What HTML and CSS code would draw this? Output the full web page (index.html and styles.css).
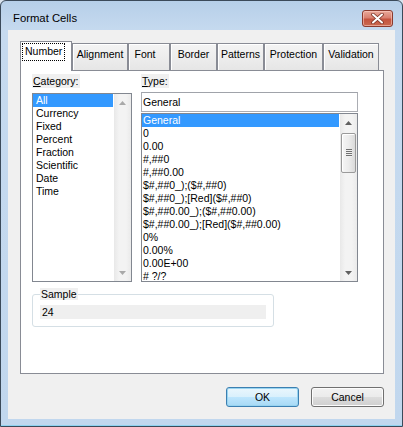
FILE: index.html
```html
<!DOCTYPE html>
<html lang="en">
<head>
<meta charset="utf-8">
<title>Format Cells</title>
<link rel="stylesheet" href="styles.css">
</head>
<body>
<div class="window">
  <div class="titlebar">
    <span class="title">Format Cells</span>
    <button class="close" aria-label="Close">
      <svg width="13" height="11" viewBox="0 0 13 11">
        <path d="M2 1.5 L11 9.5 M11 1.5 L2 9.5" stroke="#7a3326" stroke-width="3.6" stroke-linecap="round"/>
        <path d="M2 1.5 L11 9.5 M11 1.5 L2 9.5" stroke="#ffffff" stroke-width="2" stroke-linecap="round"/>
      </svg>
    </button>
  </div>

  <div class="client">
    <div class="tabs">
      <div class="tab tab-number active"><span class="focus">Number</span></div>
      <div class="tab tab-alignment">Alignment</div>
      <div class="tab tab-font">Font</div>
      <div class="tab tab-border">Border</div>
      <div class="tab tab-patterns">Patterns</div>
      <div class="tab tab-protection">Protection</div>
      <div class="tab tab-validation">Validation</div>
    </div>

    <div class="panel">
      <div class="columns">
        <div class="col col-category">
          <div class="label"><u>C</u>ategory:</div>
          <div class="listbox list-category">
            <ul class="items">
              <li class="selected">All</li>
              <li>Currency</li>
              <li>Fixed</li>
              <li>Percent</li>
              <li>Fraction</li>
              <li>Scientific</li>
              <li>Date</li>
              <li>Time</li>
            </ul>
            <div class="scrollbar disabled">
              <div class="sb-btn">
                <svg width="7" height="4" viewBox="0 0 7 4"><polygon points="0,4 3.5,0 7,4"/></svg>
              </div>
              <div class="sb-track"></div>
              <div class="sb-btn">
                <svg width="7" height="4" viewBox="0 0 7 4"><polygon points="0,0 7,0 3.5,4"/></svg>
              </div>
            </div>
          </div>
        </div>

        <div class="col col-type">
          <div class="label"><u>T</u>ype:</div>
          <div class="textbox">General</div>
          <div class="listbox list-type">
            <ul class="items">
              <li class="selected">General</li>
              <li>0</li>
              <li>0.00</li>
              <li>#,##0</li>
              <li>#,##0.00</li>
              <li>$#,##0_);($#,##0)</li>
              <li>$#,##0_);[Red]($#,##0)</li>
              <li>$#,##0.00_);($#,##0.00)</li>
              <li>$#,##0.00_);[Red]($#,##0.00)</li>
              <li>0%</li>
              <li>0.00%</li>
              <li>0.00E+00</li>
              <li># ?/?</li>
            </ul>
            <div class="scrollbar">
              <div class="sb-btn">
                <svg width="7" height="4" viewBox="0 0 7 4"><polygon points="0,4 3.5,0 7,4"/></svg>
              </div>
              <div class="sb-track">
                <div class="sb-thumb">
                  <span class="grip"></span>
                </div>
              </div>
              <div class="sb-btn">
                <svg width="7" height="4" viewBox="0 0 7 4"><polygon points="0,0 7,0 3.5,4"/></svg>
              </div>
            </div>
          </div>
        </div>
      </div>

      <fieldset class="sample">
        <legend>Sample</legend>
        <div class="sample-value">24</div>
      </fieldset>
    </div>

    <div class="buttons">
      <button class="btn default">OK</button>
      <button class="btn">Cancel</button>
    </div>
  </div>
</div>
</body>
</html>
```

FILE: styles.css
```css
* {
  box-sizing: border-box;
}

html,
body {
  margin: 0;
  padding: 0;
  background: #d9e3ee;
}

body {
  font-family: "Liberation Sans", Arial, sans-serif;
  font-size: 10.5px;
  color: #000;
}

/* window frame */
.window {
  width: 403px;
  height: 427px;
  border: 1px solid #3b4a5a;
  border-radius: 6px 6px 0 0;
  padding: 0 7px 7px 7px;
  background: linear-gradient(to bottom, #b6cfe9 0, #c6daef 30px, #c1d7ee 100%);
  box-shadow: inset 0 -1px 0 #8fd3f0;
  display: flex;
  flex-direction: column;
}

.titlebar {
  height: 29px;
  display: flex;
  align-items: flex-start;
  justify-content: space-between;
}

.title {
  font-size: 11.3px;
  line-height: 14px;
  margin: 10px 0 0 5px;
  color: #000;
}

.close {
  width: 31px;
  height: 17px;
  margin: 9px 2px 0 0;
  padding: 0;
  border: 1px solid #8a3b2f;
  border-radius: 3px;
  background: linear-gradient(to bottom, #e9a99a 0, #d98070 45%, #c5533e 55%, #c96a4f 100%);
  box-shadow: inset 0 0 0 1px rgba(255, 210, 200, 0.55);
  display: flex;
  align-items: center;
  justify-content: center;
}

/* client area */
.client {
  flex: 1;
  background: #f0f0f0;
  padding: 11px 11px 0 12px;
  display: flex;
  flex-direction: column;
}

/* tab strip */
.tabs {
  height: 29px;
  display: flex;
  align-items: flex-end;
  position: relative;
  z-index: 1;
}

.tab {
  height: 27px;
  border: 1px solid #898c95;
  border-bottom: none;
  background: linear-gradient(to bottom, #f4f4f4, #e6e6e6);
  box-shadow: inset 1px 1px 0 #ffffff;
  text-align: center;
  line-height: 13px;
  padding-top: 4px;
  white-space: nowrap;
}

.tab.active {
  height: 30px;
  margin-bottom: -1px;
  background: #ffffff;
  box-shadow: none;
  padding-top: 2px;
  text-align: left;
  padding-left: 2px;
}

.focus {
  display: inline-block;
  outline: 1px dotted #000;
  padding: 1px 2px 2px 2px;
}

.tab-number { width: 52px; }
.tab-alignment { width: 56px; }
.tab-font { width: 42px; padding-right: 8px; }
.tab-border { width: 47px; }
.tab-patterns { width: 47px; }
.tab-protection { width: 59px; }
.tab-validation { width: 56px; }

/* tab page */
.panel {
  width: 364px;
  height: 304px;
  border: 1px solid #898c95;
  background: #ffffff;
  padding: 3px 0 0 11px;
}

.columns {
  display: flex;
  gap: 9px;
}

.col {
  display: flex;
  flex-direction: column;
  align-items: flex-start;
}

.label {
  background: #f0f0f0;
  line-height: 14px;
  height: 14px;
  padding: 0 1px;
}

.col-category {
  width: 100px;
}

.col-category .label {
  margin-bottom: 5px;
}

.col-type {
  width: 217px;
}

.textbox {
  width: 217px;
  height: 20px;
  margin-top: 4px;
  border: 1px solid #abadb3;
  border-top-color: #a0a3aa;
  line-height: 18px;
  padding-left: 1px;
}

/* list boxes */
.listbox {
  border: 1px solid #828790;
  background: #fff;
  display: flex;
  overflow: hidden;
}

.list-category {
  width: 100px;
  height: 189px;
}

.list-type {
  width: 217px;
  height: 169px;
  margin-top: 1px;
}

.items {
  list-style: none;
  margin: 0;
  padding: 0;
  flex: 1;
  overflow: hidden;
}

.items li {
  height: 13px;
  line-height: 13px;
  white-space: nowrap;
  margin-right: 1px;
}

.list-category .items li {
  padding-left: 3px;
}

.list-type .items li {
  padding-left: 1px;
}

.items li.selected {
  background: #3399ff;
  color: #fff;
}

/* scroll bars */
.scrollbar {
  width: 17px;
  display: flex;
  flex-direction: column;
  background: linear-gradient(to right, #e8e8e8, #f3f3f3 30%, #f3f3f3 70%, #eaeaea);
}

.sb-btn {
  height: 17px;
  display: flex;
  align-items: center;
  justify-content: center;
}

.sb-btn svg {
  fill: #606060;
}

.scrollbar.disabled .sb-btn svg {
  fill: #a9a9a9;
}

.sb-track {
  flex: 1;
  padding-top: 2px;
}

.sb-thumb {
  width: 15px;
  height: 40px;
  margin-left: 1px;
  border: 1px solid #9a9a9a;
  border-radius: 2px;
  background: linear-gradient(to right, #f6f6f6, #ececec 50%, #dadada);
  box-shadow: inset 1px 1px 0 #ffffff;
  display: flex;
  align-items: center;
  justify-content: center;
}

.grip {
  width: 6px;
  height: 8px;
  background: repeating-linear-gradient(to bottom, #707070 0, #707070 1px, #f0f0f0 1px, #f0f0f0 2px);
}

/* sample group */
.sample {
  width: 242px;
  margin: 6px 0 0 0;
  padding: 5px 7px 7px 7px;
  border: 1px solid #d5dfe5;
  border-radius: 3px;
  min-width: 0;
}

.sample legend {
  background: #f0f0f0;
  padding: 0 1px;
  line-height: 12px;
}

.sample-value {
  width: 226px;
  height: 14px;
  background: #efefef;
  line-height: 14px;
  padding-left: 2px;
}

/* dialog buttons */
.buttons {
  margin-top: 13px;
  display: flex;
  justify-content: flex-end;
  gap: 12px;
}

.btn {
  width: 73px;
  height: 20px;
  padding: 0;
  font-family: "Liberation Sans", Arial, sans-serif;
  font-size: 10.5px;
  color: #000;
  border: 1px solid #707070;
  border-radius: 3px;
  background: linear-gradient(to bottom, #f2f2f2 0, #ebebeb 50%, #dddddd 50%, #cfcfcf 100%);
  box-shadow: inset 0 0 0 1px #fcfcfc;
}

.btn.default {
  border-color: #3c7fb1;
  background: linear-gradient(to bottom, #eaf6fd 0, #d9f0fc 50%, #bee6fd 50%, #a7d9f5 100%);
  box-shadow: inset 0 0 0 1px #98d4f0;
}
```
